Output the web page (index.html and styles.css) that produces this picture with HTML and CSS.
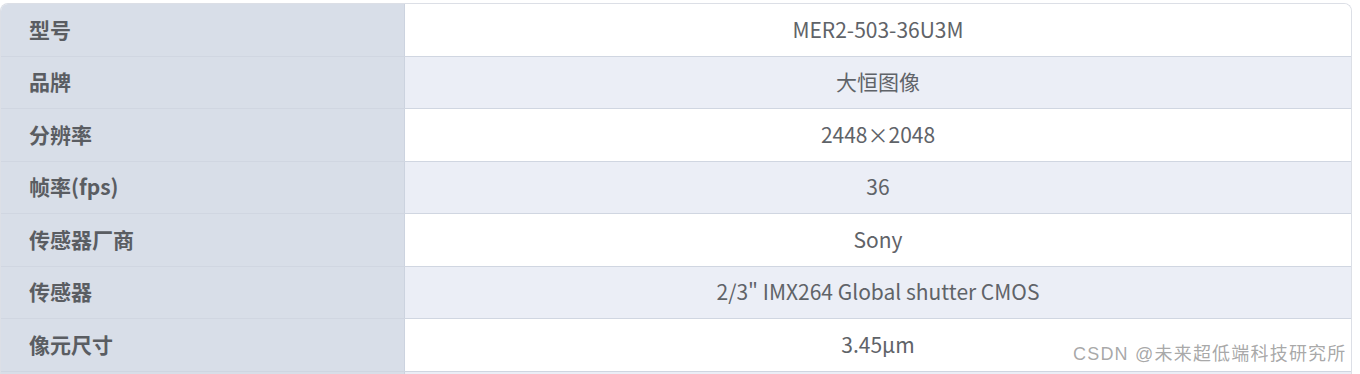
FILE: index.html
```html
<!DOCTYPE html>
<html lang="zh">
<head>
<meta charset="utf-8">
<link rel="stylesheet" href="styles.css">
</head>
<body>
<div class="page">
  <div class="spec">
    <div class="row"><div class="key">型号</div><div class="val">MER2-503-36U3M</div></div>
    <div class="row alt"><div class="key">品牌</div><div class="val">大恒图像</div></div>
    <div class="row"><div class="key">分辨率</div><div class="val">2448×2048</div></div>
    <div class="row alt"><div class="key">帧率(fps)</div><div class="val">36</div></div>
    <div class="row"><div class="key">传感器厂商</div><div class="val">Sony</div></div>
    <div class="row alt"><div class="key">传感器</div><div class="val">2/3" IMX264 Global shutter CMOS</div></div>
    <div class="row"><div class="key">像元尺寸</div><div class="val">3.45μm</div></div>
    <div class="row alt"><div class="key"></div><div class="val"></div></div>
  </div>
  <div class="mark">CSDN @未来超低端科技研究所</div>
</div>
</body>
</html>
```
FILE: styles.css
```css
html, body {
  margin: 0;
  padding: 0;
  background: #ffffff;
  overflow: hidden;
}
.page {
  position: relative;
  width: 1360px;
  height: 374px;
  overflow: hidden;
}
.spec {
  margin-top: 3px;
  width: 1352px;
  box-sizing: border-box;
  border: 1px solid #dcdfe6;
  border-bottom: none;
  border-radius: 8px 8px 0 0;
  overflow: hidden;
  font-family: "Noto Sans CJK SC", "Noto Sans", sans-serif;
  font-size: 21px;
  color: #5f6368;
}
.row {
  display: grid;
  grid-template-columns: 404px 1fr;
  height: 53px;
  box-sizing: border-box;
  border-top: 1px solid #d0d6e1;
}
.row:nth-child(even) {
  height: 52px;
}
.row:first-child {
  border-top: none;
  height: 52px;
}
.key {
  background: #d8dee8;
  border-right: 1px solid #ccd3df;
  padding-left: 28px;
  padding-bottom: 3px;
  font-weight: 700;
  color: #5a5d62;
  display: flex;
  align-items: center;
}
.val {
  background: #ffffff;
  padding-bottom: 3px;
  display: flex;
  align-items: center;
  justify-content: center;
}
.alt .val {
  background: #ebeef6;
}
.mark {
  position: absolute;
  left: 1073px;
  top: 342px;
  font-family: "Liberation Sans", "Noto Sans CJK SC", sans-serif;
  font-size: 18px;
  line-height: 24px;
  letter-spacing: 1.2px;
  color: rgba(130, 130, 130, 0.7);
  white-space: nowrap;
}
```
